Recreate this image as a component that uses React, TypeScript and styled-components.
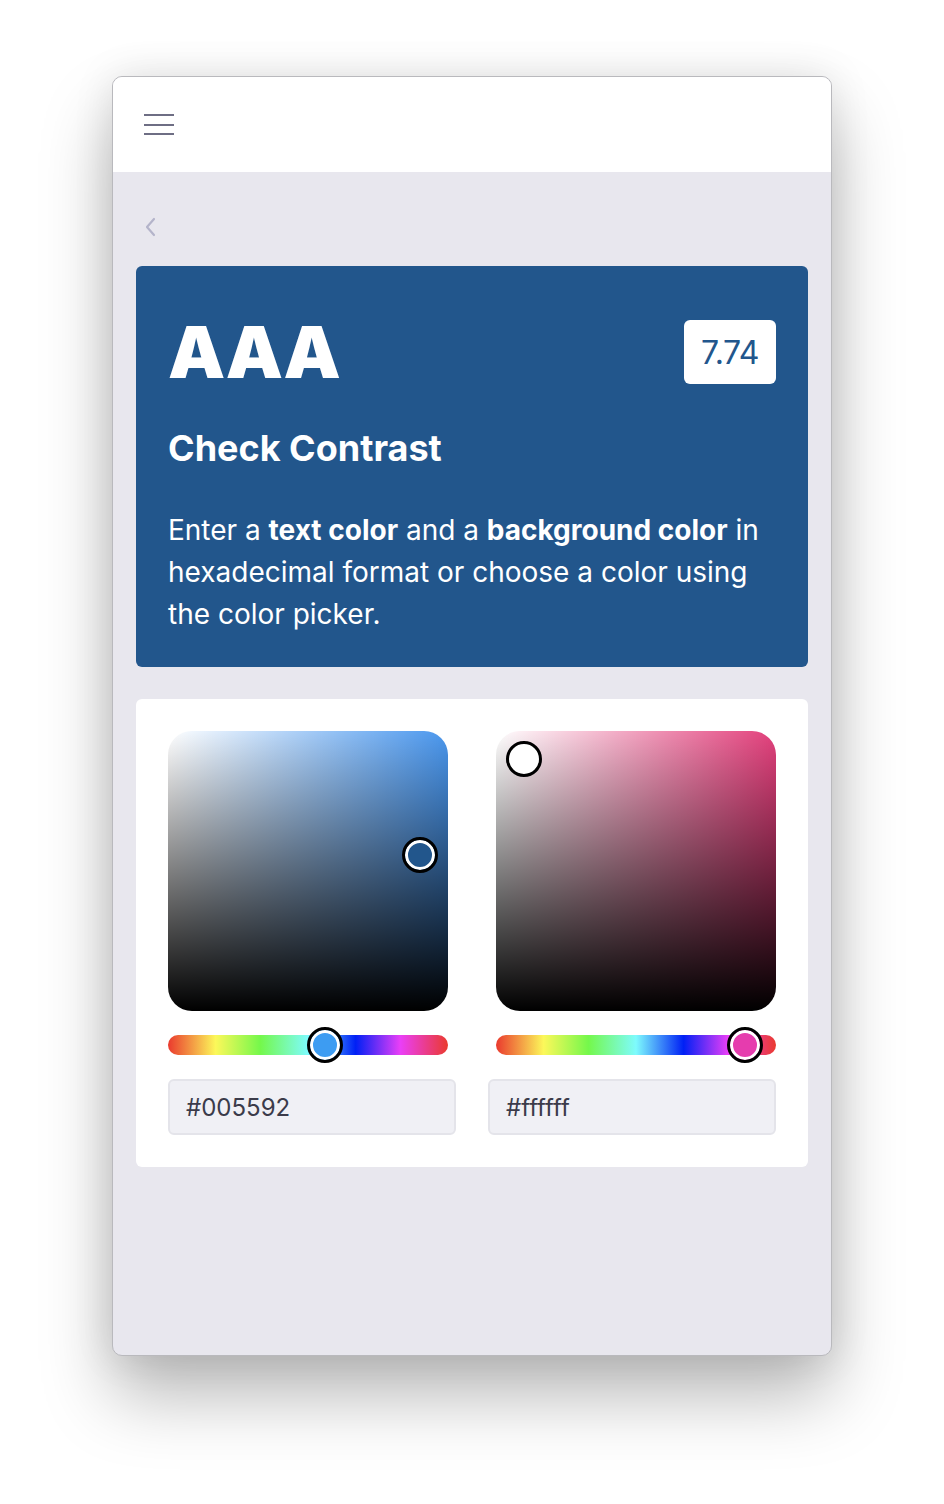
import React, { FC } from 'react';
import styled, { createGlobalStyle } from 'styled-components';

const GlobalStyle = createGlobalStyle`
  html, body {
    margin: 0;
    padding: 0;
    background: #ffffff;
  }
  body {
    font-family: Inter, "Noto Sans", "Liberation Sans", sans-serif;
    -webkit-font-smoothing: antialiased;
  }
  * {
    box-sizing: border-box;
  }
`;

const Stage = styled.div`
  padding: 76px 112px 148px;
  background: #ffffff;
`;

const Window = styled.div`
  height: 1280px;
  display: flex;
  flex-direction: column;
  border: 1px solid #b9b9bd;
  border-radius: 10px;
  overflow: hidden;
  background: #e8e7ee;
  box-shadow: 0 40px 70px rgba(0, 0, 0, 0.28), 0 0 40px rgba(0, 0, 0, 0.1);
`;

const TopBar = styled.header`
  height: 95px;
  flex-shrink: 0;
  display: flex;
  align-items: center;
  padding: 0 31px;
  background: #ffffff;
`;

const MenuButton = styled.button`
  display: flex;
  flex-direction: column;
  gap: 7.5px;
  width: 30px;
  padding: 0;
  border: 0;
  background: none;
  cursor: pointer;
`;

const MenuLine = styled.span`
  display: block;
  height: 2px;
  background: #6e6e84;
`;

const Main = styled.main`
  flex: 1;
  display: flex;
  flex-direction: column;
  padding: 24px 23px;
`;

const BackRow = styled.div`
  height: 62px;
  margin-bottom: 8px;
  display: flex;
  align-items: center;
  padding-left: 8px;
`;

const BackButton = styled.button`
  display: flex;
  padding: 0;
  border: 0;
  background: none;
  cursor: pointer;
`;

const ResultCard = styled.section`
  background: #22568c;
  color: #ffffff;
  border-radius: 6px;
  padding: 32px;
`;

const ResultHead = styled.div`
  margin-top: 22px;
  height: 64px;
  display: flex;
  align-items: center;
  justify-content: space-between;
`;

const Rating = styled.h1`
  margin: 0;
  font-size: 72px;
  line-height: 64px;
  font-weight: 900;
  letter-spacing: -0.5px;
`;

const RatioBadge = styled.div`
  height: 64px;
  min-width: 92px;
  padding: 0 16px;
  display: flex;
  align-items: center;
  justify-content: center;
  background: #ffffff;
  color: #22568c;
  border-radius: 6px;
  font-size: 32px;
  font-weight: 400;
  letter-spacing: -0.5px;
`;

const Title = styled.h2`
  margin: 44px 0 0;
  font-size: 36px;
  line-height: 41px;
  font-weight: 700;
`;

const Description = styled.p`
  margin: 40px 0 0;
  font-size: 28px;
  line-height: 42px;
  font-weight: 400;

  strong {
    font-weight: 700;
  }
`;

const PickerCard = styled.section`
  margin-top: 32px;
  background: #ffffff;
  border-radius: 6px;
  padding: 32px;
`;

const PickerGrid = styled.div`
  display: grid;
  grid-template-columns: 1fr 1fr;
  column-gap: 32px;
`;

const PickerColumn = styled.div<{ $align: 'start' | 'end' }>`
  display: flex;
  flex-direction: column;
  align-items: ${p => (p.$align === 'start' ? 'flex-start' : 'flex-end')};
  gap: 24px;
`;

const Saturation = styled.div<{ $hue: string }>`
  position: relative;
  width: 280px;
  height: 280px;
  border-radius: 24px;
  background:
    linear-gradient(to top, #000000, rgba(0, 0, 0, 0)),
    linear-gradient(to right, #ffffff, rgba(255, 255, 255, 0)),
    ${p => p.$hue};
`;

const HueBar = styled.div`
  position: relative;
  width: 280px;
  height: 20px;
  border-radius: 10px;
  background: linear-gradient(
    to right,
    #ea3a2e 0%,
    #fcf85a 17%,
    #74f84b 33%,
    #7efbfd 50%,
    #0020f5 67%,
    #ea3ff7 83%,
    #ea3a2e 100%
  );
`;

const Pointer = styled.div<{ $fill: string }>`
  position: absolute;
  width: 36px;
  height: 36px;
  margin: -18px 0 0 -18px;
  border-radius: 50%;
  border: 3px solid #000000;
  box-shadow: inset 0 0 0 3px #ffffff;
  background: ${p => p.$fill};
`;

const HexInput = styled.input`
  width: 100%;
  height: 56px;
  padding: 0 16px;
  border: 2px solid #e4e4ea;
  border-radius: 6px;
  background: #f0f0f5;
  color: #3b3b4a;
  font-family: Inter, "Noto Sans", "Liberation Sans", sans-serif;
  font-size: 24px;
  outline: none;
`;

type PickerProps = {
  align: 'start' | 'end';
  hue: string;
  hueFill: string;
  value: string;
  fill: string;
  x: number;
  y: number;
  hueX: number;
};

const ColorPicker: FC<PickerProps> = ({ align, hue, hueFill, value, fill, x, y, hueX }) => (
  <PickerColumn $align={align}>
    <Saturation $hue={hue}>
      <Pointer $fill={fill} style={{ left: x, top: y }} />
    </Saturation>
    <HueBar>
      <Pointer $fill={hueFill} style={{ left: hueX, top: 10 }} />
    </HueBar>
    <HexInput defaultValue={value} spellCheck={false} />
  </PickerColumn>
);

export default function App() {
  return (
    <>
      <GlobalStyle />
      <Stage>
        <Window>
          <TopBar>
            <MenuButton aria-label="Menu">
              <MenuLine />
              <MenuLine />
              <MenuLine />
            </MenuButton>
          </TopBar>
          <Main>
            <BackRow>
              <BackButton aria-label="Back">
                <svg width="12" height="20" viewBox="0 0 12 20" fill="none">
                  <path d="M10 2 L3 10 L10 18" stroke="#b4b4ca" strokeWidth="2.2" strokeLinecap="round" strokeLinejoin="round" />
                </svg>
              </BackButton>
            </BackRow>
            <ResultCard>
              <ResultHead>
                <Rating>AAA</Rating>
                <RatioBadge>7.74</RatioBadge>
              </ResultHead>
              <Title>Check Contrast</Title>
              <Description>
                Enter a <strong>text color</strong> and a <strong>background color</strong> in hexadecimal
                format or choose a color using the color picker.
              </Description>
            </ResultCard>
            <PickerCard>
              <PickerGrid>
                <ColorPicker
                  align="start"
                  hue="#4a97ee"
                  hueFill="#3d9cf2"
                  value="#005592"
                  fill="#22568c"
                  x={252}
                  y={124}
                  hueX={157}
                />
                <ColorPicker
                  align="end"
                  hue="#e3407c"
                  hueFill="#e63cae"
                  value="#ffffff"
                  fill="#ffffff"
                  x={28}
                  y={28}
                  hueX={249}
                />
              </PickerGrid>
            </PickerCard>
          </Main>
        </Window>
      </Stage>
    </>
  );
}
